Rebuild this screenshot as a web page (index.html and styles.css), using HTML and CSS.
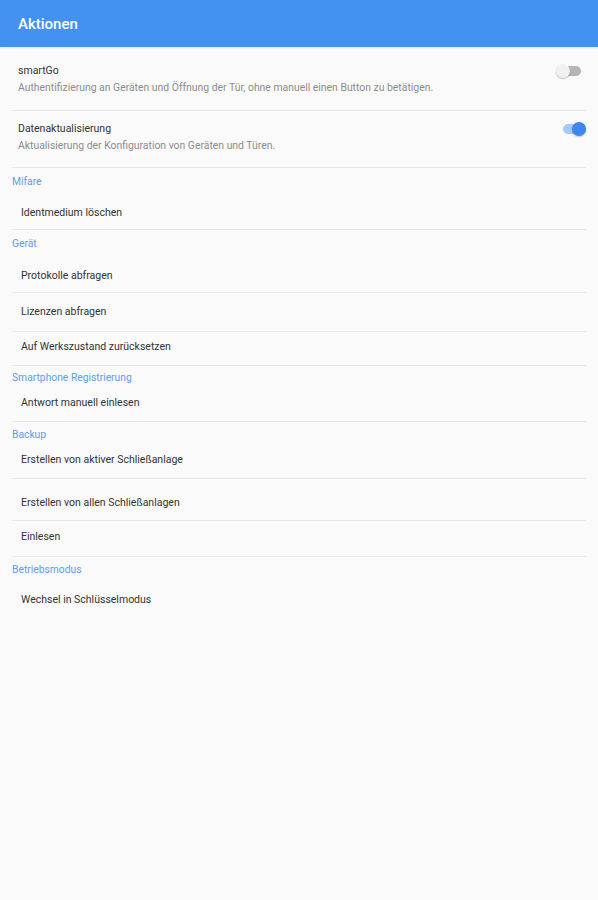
FILE: index.html
```html
<!DOCTYPE html>
<html lang="de">
<head>
<meta charset="utf-8">
<title>Aktionen</title>
<link rel="stylesheet" href="styles.css">
</head>
<body>
<header class="appbar">
  <h1 class="appbar-title">Aktionen</h1>
</header>
<main class="list">
  <div class="setting setting-first">
    <div class="setting-text">
      <div class="setting-title">smartGo</div>
      <div class="setting-sub">Authentifizierung an Geräten und Öffnung der Tür, ohne manuell einen Button zu betätigen.</div>
    </div>
    <div class="toggle toggle-off"><span class="track"></span><span class="thumb"></span></div>
  </div>
  <div class="setting setting-second">
    <div class="setting-text">
      <div class="setting-title">Datenaktualisierung</div>
      <div class="setting-sub">Aktualisierung der Konfiguration von Geräten und Türen.</div>
    </div>
    <div class="toggle toggle-on"><span class="track"></span><span class="thumb"></span></div>
  </div>

  <div class="section pt7">Mifare</div>
  <div class="item pt10 pb9">Identmedium löschen</div>

  <div class="section pt7">Gerät</div>
  <div class="item pt11 pb9">Protokolle abfragen</div>
  <div class="item pt12 pb12">Lizenzen abfragen</div>
  <div class="item pt8 pb11">Auf Werkszustand zurücksetzen</div>

  <div class="section pt5">Smartphone Registrierung</div>
  <div class="item pt4 pb11">Antwort manuell einlesen</div>

  <div class="section pt6">Backup</div>
  <div class="item pt4 pb11">Erstellen von aktiver Schließanlage</div>
  <div class="item pt17 pb10">Erstellen von allen Schließanlagen</div>
  <div class="item pt9 pb12">Einlesen</div>

  <div class="section pt6">Betriebsmodus</div>
  <div class="item pt9 pb9 item-last">Wechsel in Schlüsselmodus</div>
</main>
</body>
</html>
```

FILE: styles.css
```css
* { box-sizing: border-box; }
html, body {
  margin: 0;
  padding: 0;
  background: #fafafa;
  font-family: Roboto, "Noto Sans", sans-serif;
  height: 100%;
}
.appbar {
  height: 47px;
  background: #4391f1;
  display: flex;
  align-items: center;
  padding-left: 18px;
  box-shadow: 0 1px 2px rgba(0,0,0,0.08);
}
.appbar-title {
  margin: 0;
  color: #ffffff;
  font-size: 15px;
  font-weight: 500;
}
.list {
  display: flex;
  flex-direction: column;
  margin: 0 12px;
}
.setting {
  display: flex;
  align-items: flex-start;
  border-bottom: 1px solid #e8e8e8;
  padding-left: 6px;
}
.setting-first { padding-top: 17px; padding-bottom: 15px; }
.setting-second { padding-top: 11px; padding-bottom: 14px; }
.setting-text {
  flex: 1;
  display: flex;
  flex-direction: column;
  gap: 3px;
}
.setting-title {
  font-size: 10.5px;
  line-height: 14px;
  color: #333333;
}
.setting-sub {
  font-size: 10.4px;
  line-height: 14px;
  color: #8c8c8c;
}
.toggle {
  position: relative;
  width: 26px;
  height: 14px;
  flex: none;
}
.toggle .track {
  position: absolute;
  left: 2px;
  right: 1px;
  top: 2px;
  height: 10px;
  border-radius: 5px;
}
.toggle .thumb {
  position: absolute;
  top: 0;
  width: 14px;
  height: 14px;
  border-radius: 50%;
  box-shadow: 0 1px 1.5px rgba(0,0,0,0.25);
}
.toggle-off { margin-top: 0; margin-right: 4px; }
.toggle-off .track { background: #b5b5b5; }
.toggle-off .thumb { left: 0; background: #f1f1f1; }
.toggle-on { margin-top: 0; margin-right: -1px; }
.toggle-on .track { background: #a8c8f6; }
.toggle-on .thumb { right: 1px; background: #3f87f0; }
.section {
  font-size: 10.3px;
  line-height: 14px;
  padding-bottom: 7px;
  color: #5d9cf0;
}
.item {
  font-size: 10.5px;
  line-height: 14px;
  color: #333333;
  padding-left: 9px;
  border-bottom: 1px solid #e8e8e8;
}
.item-last { border-bottom: none; }
.pt4 { padding-top: 4px; }
.pt5 { padding-top: 5px; }
.pt6 { padding-top: 6px; }
.pt7 { padding-top: 7px; }
.pt8 { padding-top: 8px; }
.pt9 { padding-top: 9px; }
.pt10 { padding-top: 10px; }
.pt11 { padding-top: 11px; }
.pt12 { padding-top: 12px; }
.pt17 { padding-top: 17px; }
.pb9 { padding-bottom: 9px; }
.pb10 { padding-bottom: 10px; }
.pb11 { padding-bottom: 11px; }
.pb12 { padding-bottom: 12px; }
```
